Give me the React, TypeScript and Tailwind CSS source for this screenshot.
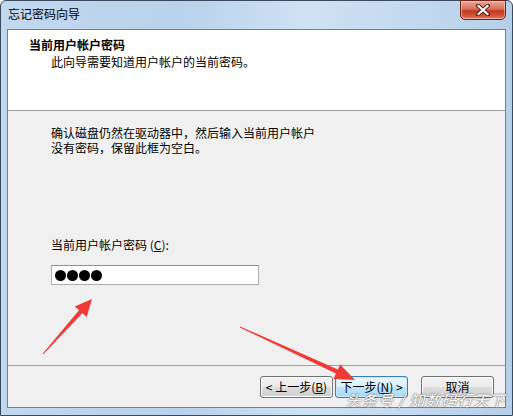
import React from "react";

const font = { fontFamily: '"Noto Sans CJK SC", "Noto Sans", sans-serif' };

function arrowPoints(tx: number, ty: number, hx: number, hy: number, headLen: number, headHalf: number, shaft: number) {
  const dx = hx - tx;
  const dy = hy - ty;
  const len = Math.hypot(dx, dy);
  const ux = dx / len;
  const uy = dy / len;
  const px = -uy;
  const py = ux;
  const bx = hx - ux * headLen;
  const by = hy - uy * headLen;
  const pts = [
    [tx + px * 0.5, ty + py * 0.5],
    [bx + px * shaft, by + py * shaft],
    [bx + px * headHalf, by + py * headHalf],
    [hx, hy],
    [bx - px * headHalf, by - py * headHalf],
    [bx - px * shaft, by - py * shaft],
    [tx - px * 0.5, ty - py * 0.5],
  ];
  return pts.map((p) => p.map((v) => v.toFixed(1)).join(",")).join(" ");
}

function Btn({ children, primary }: { children: React.ReactNode; primary?: boolean }) {
  return (
    <div
      className={
        "h-[22px] w-[73px] rounded-[3px] border flex items-center justify-center text-[12px] text-black " +
        (primary
          ? "border-[#3c7fb1] bg-[linear-gradient(#eaf6fd_0%,#d9f0fc_50%,#bee6fd_51%,#a7d9f5_100%)] shadow-[inset_0_0_0_1px_#c6e9fb]"
          : "border-[#707070] bg-[linear-gradient(#f2f2f2_0%,#ebebeb_50%,#dddddd_51%,#cfcfcf_100%)] shadow-[inset_0_0_0_1px_#fcfcfc]")
      }
    >
      {children}
    </div>
  );
}

export default function App() {
  return (
    <div
      className="relative w-[513px] h-[416px] overflow-hidden bg-white select-none"
      style={font}
    >
      {/* window frame */}
      <div className="w-full h-full flex flex-col rounded-t-[6px] border border-[#3a4a5c] bg-[linear-gradient(90deg,#c2d8ef_0%,#b9d1ea_35%,#cfe2f5_60%,#c3d9ef_80%,#b6cfe9_100%)]">
        {/* title bar */}
        <div className="h-[28px] flex items-start justify-between shrink-0">
          <span className="pl-[7px] pt-[5px] text-[12px] leading-[16px] text-black">忘记密码向导</span>
          <div className="mr-[6px] mt-[-1px] w-[46px] h-[20px] rounded-b-[5px] border border-[#6b2219] bg-[linear-gradient(#e9a99a_0%,#d7705a_45%,#c4361d_55%,#d35b3c_85%,#e48b6c_100%)] shadow-[inset_0_0_0_1px_rgba(255,220,210,0.5)] flex items-center justify-center">
            <svg width="14" height="12" viewBox="0 0 14 12">
              <path d="M2 1.5 L12 10.5 M12 1.5 L2 10.5" stroke="#5a1b12" strokeWidth="4" strokeLinecap="square" />
              <path d="M2.5 2 L11.5 10 M11.5 2 L2.5 10" stroke="#ffffff" strokeWidth="2.2" strokeLinecap="square" />
            </svg>
          </div>
        </div>

        {/* client area */}
        <div className="mx-[6px] mb-[7px] flex-1 flex flex-col border border-[#6f8196] bg-[#f0f0f0]">
          {/* header */}
          <div className="h-[81px] shrink-0 bg-white border-b border-[#a0a0a0] pl-[21px] pt-[7px]">
            <div className="text-[12px] leading-[16px] font-bold text-black">当前用户帐户密码</div>
            <div className="pl-[22px] pt-[1px] text-[12px] leading-[16px] text-black">此向导需要知道用户帐户的当前密码。</div>
          </div>

          {/* body */}
          <div className="flex-1 pl-[43px] pt-[14px] text-[12px] text-black">
            <div className="leading-[15px] w-[380px]">
              确认磁盘仍然在驱动器中，然后输入当前用户帐户
              <br />
              没有密码，保留此框为空白。
            </div>
            <div className="mt-[82px] leading-[16px]">
              当前用户帐户密码 (<span className="underline">C</span>):
            </div>
            <div className="mt-[12px] w-[208px] h-[20px] border border-[#abadb3] border-t-[#8e9196] bg-white flex items-center gap-[1px] pl-[3px]">
              {[0, 1, 2, 3].map((i) => (
                <span key={i} className="block w-[11px] h-[11px] rounded-full bg-black" />
              ))}
            </div>
          </div>

          {/* footer */}
          <div className="h-[42px] shrink-0 border-t border-[#a0a0a0] flex items-start pt-[10px] pl-[252px] gap-[2px]">
            <Btn>
              &lt; 上一步(<span className="underline">B</span>)
            </Btn>
            <Btn primary>
              下一步(<span className="underline">N</span>) &gt;
            </Btn>
            <div className="w-[9px]" />
            <Btn>取消</Btn>
          </div>
        </div>
      </div>

      {/* red annotation arrows */}
      <svg className="absolute inset-0 pointer-events-none" width="513" height="416">
        <polygon points={arrowPoints(43, 354, 92, 299, 17, 8, 2.2)} fill="#f03a35" />
        <polygon points={arrowPoints(240, 327, 355, 380, 20, 8, 2.2)} fill="#f03a35" />
      </svg>

      {/* watermark */}
      <div className="absolute left-[346px] top-[391px] text-[15px] leading-[18px] tracking-[1px] italic text-white [text-shadow:0_0_2px_#6a6a6a,0_0_1px_#6a6a6a] pointer-events-none whitespace-nowrap">
        头条号 / 知数码行天下
      </div>
    </div>
  );
}
